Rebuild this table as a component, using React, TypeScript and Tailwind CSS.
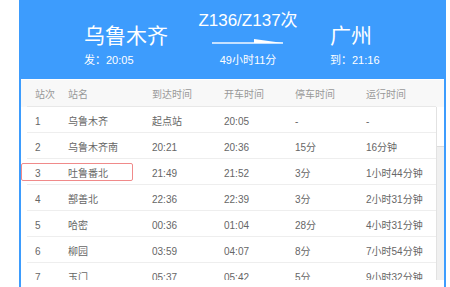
const stops = [
  ['1', '乌鲁木齐', '起点站', '20:05', '-', '-'],
  ['2', '乌鲁木齐南', '20:21', '20:36', '15分', '16分钟'],
  ['3', '吐鲁番北', '21:49', '21:52', '3分', '1小时44分钟'],
  ['4', '鄯善北', '22:36', '22:39', '3分', '2小时31分钟'],
  ['5', '哈密', '00:36', '01:04', '28分', '4小时31分钟'],
  ['6', '柳园', '03:59', '04:07', '8分', '7小时54分钟'],
  ['7', '玉门', '05:37', '05:42', '5分', '9小时32分钟'],
];

const headers = ['站次', '站名', '到达时间', '开车时间', '停车时间', '运行时间'];
const widths = ['w-[33px]', 'w-[84px]', 'w-[72px]', 'w-[71px]', 'w-[71px]', 'w-[78px]'];

function Arrow() {
  return (
    <svg width="72" height="8" viewBox="0 0 72 8" className="mt-[7px] block">
      <rect x="0" y="4.3" width="71" height="1.4" fill="#ffffff" />
      <polygon points="42,1 71,5 42,5" fill="#ffffff" />
    </svg>
  );
}

export default function App() {
  return (
    <div className="h-[287px] w-[450px] overflow-hidden bg-white font-['Liberation_Sans','Noto_Sans_CJK_SC',sans-serif]">
      <div className="ml-[19px] w-[427px] border-x-2 border-[#3d9cfd] bg-white">
        <div className="flex h-[79px] bg-[#3d9cfd] text-white">
          <div className="ml-[63px] flex w-[114px] flex-col">
            <div className="mt-[23px] text-[21px] leading-[26px]">乌鲁木齐</div>
            <div className="mt-[3px] text-[11px] leading-[16px]">发：20:05</div>
          </div>
          <div className="flex w-[100px] flex-col items-center">
            <div className="mt-[11px] text-[17px] leading-[20px]">Z136/Z137次</div>
            <Arrow />
            <div className="mt-[6px] text-[11px] leading-[16px]">49小时11分</div>
          </div>
          <div className="ml-[32px] flex flex-col">
            <div className="mt-[23px] text-[21px] leading-[26px]">广州</div>
            <div className="mt-[3px] text-[11px] leading-[16px]">到：21:16</div>
          </div>
        </div>

        <div className="pt-px">
          <div className="h-[27px] bg-[#f8f8f8] pl-[6px]">
            <div className="flex h-full w-[409px] items-center border-b border-[#e8e8e8] pt-[2px] text-[10px] text-[#999]">
              {headers.map((h, i) => (
                <div key={h} className={`${widths[i]} pl-[8px]`}>{h}</div>
              ))}
            </div>
          </div>

          <div className="flex h-[173px] overflow-hidden">
            <div className="w-[415px] pl-[6px]">
              {stops.map((row, r) => (
                <div
                  key={row[0]}
                  className="relative flex h-[26px] w-[409px] shrink-0 items-center border-b border-[#eeeeee] pt-[4px] text-[10px] text-[#666]"
                >
                  {r === 2 && (
                    <div className="absolute left-[-6px] top-[4px] h-[18px] w-[112px] rounded-[2px] border border-[#f08a8a]" />
                  )}
                  {row.map((cell, i) => (
                    <div key={i} className={`${widths[i]} pl-[8px]`}>{cell}</div>
                  ))}
                </div>
              ))}
            </div>
            <div className="w-[8px] border-l border-[#e2e2e2] bg-[#f0f0f0]">
              <div className="h-[40px] border-b border-[#dcdcdc] bg-white" />
            </div>
          </div>
          <div className="h-[10px] bg-white" />
        </div>
      </div>
    </div>
  );
}
